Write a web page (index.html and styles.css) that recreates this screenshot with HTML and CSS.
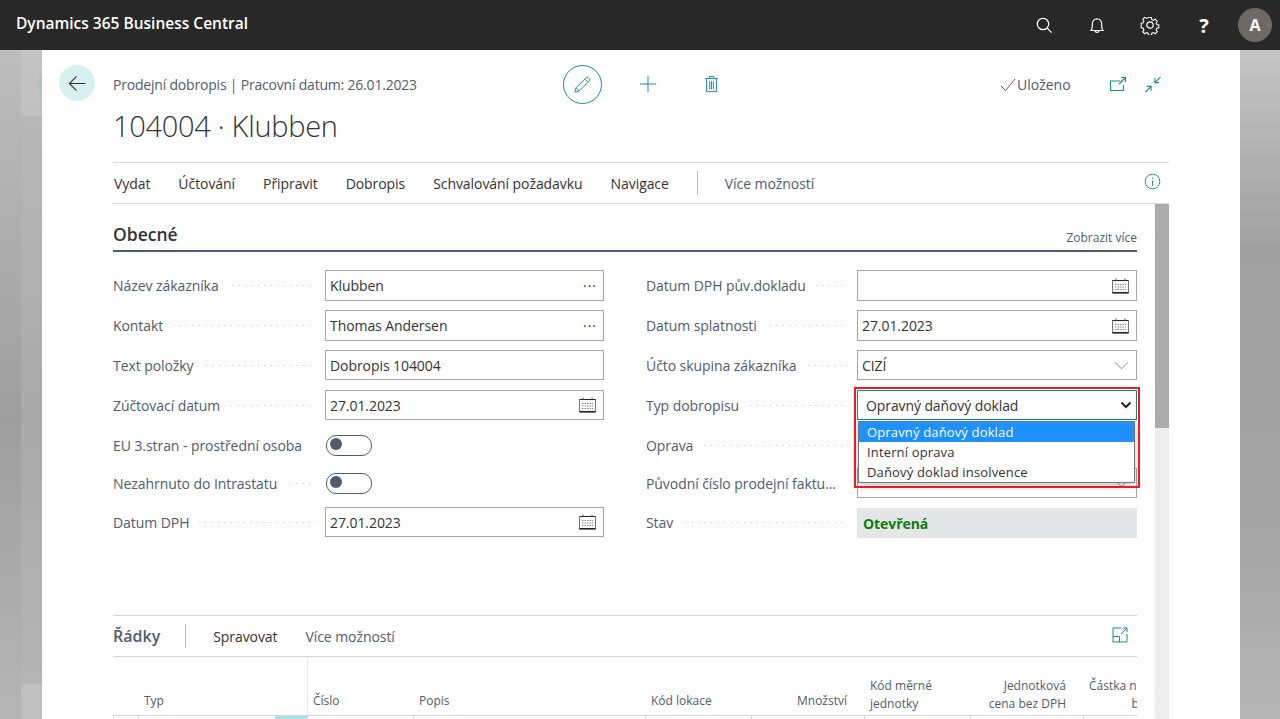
FILE: index.html
```html
<!DOCTYPE html>
<html lang="cs">
<head>
    <meta charset="utf-8">
    <title>Prodejní dobropis</title>
    <link rel="stylesheet" href="styles.css">
</head>
<body>
    <header class="topbar">
        <div class="brand">Dynamics 365 Business Central</div>
        <div class="top-icons">
            <svg class="top-ico" viewBox="0 0 20 20"><circle cx="9" cy="9" r="5.7"/><path d="M13 13l4.6 4.6"/></svg>
            <svg class="top-ico" viewBox="0 0 20 20"><path d="M4 15.500c1.200-1.400 1.400-2.800 1.400-7a4.600 4.600 0 0 1 9.200 0c0 4.200.2 5.600 1.400 7z"/><path d="M8 15.700c.2 2.200 3.800 2.200 4 0"/></svg>
            <svg class="top-ico" viewBox="0 0 20 20"><circle cx="10" cy="10" r="3.200"/><path d="M8.400 1.700h3.200l.5 2.400 1.700.7 2.100-1.300 2.200 2.300-1.300 2 .7 1.700 2.300.5v3.200l-2.300.5-.7 1.700 1.300 2-2.200 2.300-2.100-1.300-1.700.7-.5 2.400H8.400l-.5-2.400-1.700-.7-2.100 1.300-2.200-2.300 1.300-2-.7-1.700-2.300-.5V8l2.300-.5.7-1.700-1.300-2 2.200-2.300 2.100 1.300 1.700-.7z" transform="translate(1 1) scale(.9)"/></svg>
            <span class="help">?</span>
            <span class="avatar">A</span>
        </div>
    </header>

    <div class="stage">
        <div class="behind"><span class="behind-circle"></span></div>

        <main class="card">
            <div class="page-head">
                <div class="back">
                    <svg viewBox="0 0 20 20"><path d="M1.500 10h17M9 2.500L1.500 10 9 17.500"/></svg>
                </div>
                <div class="head-main">
                    <div class="head-top">
                        <div class="crumb">Prodejní dobropis | Pracovní datum: 26.01.2023</div>
                        <div class="actions">
                            <div class="edit-btn">
                                <svg viewBox="0 0 20 20"><path d="M2 18l1.200-4.600L13.800 2.800a1.600 1.600 0 0 1 2.300 0l1.100 1.100a1.600 1.600 0 0 1 0 2.300L6.600 16.800zM3.200 13.400l3.400 3.400M12.400 4.200l3.400 3.400"/></svg>
                            </div>
                            <svg class="act-ico plus" viewBox="0 0 20 20"><path d="M10 1v18M1 10h18"/></svg>
                            <svg class="act-ico trash" viewBox="0 0 16 20"><path d="M1 4h14M5.500 4V1.500h5V4M2.500 4v14.500h11V4M6 7v9M8 7v9M10 7v9"/></svg>
                        </div>
                        <div class="saved">
                            <svg viewBox="0 0 16 14"><path d="M1 8l4.500 4.500L15 1"/></svg>
                            <span>Uloženo</span>
                        </div>
                        <div class="win-icons">
                            <svg viewBox="0 0 18 16"><path d="M11 4.500H1.500v9.500h13V8.500M10 7.500L16.500 1M12 1h4.500v4.500"/></svg>
                            <svg viewBox="0 0 18 18"><path d="M17 1l-6 6M11 2.500V7h4.500M1 17l6-6M2.500 11H7v4.500"/></svg>
                        </div>
                    </div>
                    <h1 class="title">104004 · Klubben</h1>
                </div>
            </div>

            <nav class="menu">
                <a class="menu-item">Vydat</a>
                <a class="menu-item">Účtování</a>
                <a class="menu-item">Připravit</a>
                <a class="menu-item">Dobropis</a>
                <a class="menu-item">Schvalování požadavku</a>
                <a class="menu-item">Navigace</a>
                <span class="menu-sep"></span>
                <a class="menu-item muted">Více možností</a>
                <svg class="info" viewBox="0 0 18 18"><circle cx="9" cy="9" r="7.800"/><path d="M9 8v5.500M9 4.800v1.400"/></svg>
            </nav>

            <div class="scroll-area">
                <div class="content">
                    <section class="general">
                        <div class="section-head">
                            <h2>Obecné</h2>
                            <a class="show-more">Zobrazit více</a>
                        </div>
                        <div class="form-cols">
                            <div class="form-col">
                                <div class="field">
                                    <label>Název zákazníka</label><i class="dots"></i>
                                    <div class="box"><span>Klubben</span><b class="more">···</b></div>
                                </div>
                                <div class="field">
                                    <label>Kontakt</label><i class="dots"></i>
                                    <div class="box"><span>Thomas Andersen</span><b class="more">···</b></div>
                                </div>
                                <div class="field">
                                    <label>Text položky</label><i class="dots"></i>
                                    <div class="box short"><span>Dobropis 104004</span></div>
                                </div>
                                <div class="field">
                                    <label>Zúčtovací datum</label><i class="dots"></i>
                                    <div class="box short"><span>27.01.2023</span>
                                        <svg class="cal" viewBox="0 0 17 16"><use href="#cal"/></svg></div>
                                </div>
                                <div class="field tight">
                                    <label>EU 3.stran - prostřední osoba</label><i class="dots"></i>
                                    <div class="toggle"><span class="knob"></span></div>
                                </div>
                                <div class="field tight last-toggle">
                                    <label>Nezahrnuto do Intrastatu</label><i class="dots"></i>
                                    <div class="toggle"><span class="knob"></span></div>
                                </div>
                                <div class="field">
                                    <label>Datum DPH</label><i class="dots"></i>
                                    <div class="box short"><span>27.01.2023</span>
                                        <svg class="cal" viewBox="0 0 17 16"><use href="#cal"/></svg></div>
                                </div>
                            </div>

                            <div class="form-col">
                                <div class="field">
                                    <label>Datum DPH pův.dokladu</label><i class="dots"></i>
                                    <div class="box"><span></span>
                                        <svg class="cal" viewBox="0 0 17 16"><use href="#cal"/></svg></div>
                                </div>
                                <div class="field">
                                    <label>Datum splatnosti</label><i class="dots"></i>
                                    <div class="box"><span>27.01.2023</span>
                                        <svg class="cal" viewBox="0 0 17 16"><use href="#cal"/></svg></div>
                                </div>
                                <div class="field">
                                    <label>Účto skupina zákazníka</label><i class="dots"></i>
                                    <div class="box short"><span>CIZÍ</span>
                                        <svg class="chev" viewBox="0 0 16 9"><path d="M1 1l7 7 7-7"/></svg></div>
                                </div>
                                <div class="field">
                                    <label>Typ dobropisu</label><i class="dots"></i>
                                    <div class="select-wrap">
                                        <div class="select-open">
                                            <span>Opravný daňový doklad</span>
                                            <svg viewBox="0 0 12 8"><path d="M1.500 1.500L6 6l4.500-4.500"/></svg>
                                        </div>
                                        <ul class="options">
                                            <li class="current">Opravný daňový doklad</li>
                                            <li>Interní oprava</li>
                                            <li>Daňový doklad insolvence</li>
                                        </ul>
                                        <div class="red-frame"></div>
                                    </div>
                                </div>
                                <div class="field tight">
                                    <label>Oprava</label><i class="dots"></i>
                                    <div class="box-gap"></div>
                                </div>
                                <div class="field tight last-toggle">
                                    <label>Původní číslo prodejní faktu...</label><i class="dots"></i>
                                    <div class="box short"><span></span>
                                        <svg class="chev" viewBox="0 0 16 9"><path d="M1 1l7 7 7-7"/></svg></div>
                                </div>
                                <div class="field">
                                    <label>Stav</label><i class="dots"></i>
                                    <div class="status">Otevřená</div>
                                </div>
                            </div>
                        </div>
                    </section>

                    <section class="lines">
                        <div class="lines-bar">
                            <strong class="lines-title">Řádky</strong>
                            <span class="lines-sep"></span>
                            <a class="menu-item">Spravovat</a>
                            <a class="menu-item muted">Více možností</a>
                            <svg class="expand" viewBox="0 0 16 16"><path d="M9 1H1v14h14V7M1 9.500h6.500V15M9 7l6-6M11 1h4v4"/></svg>
                        </div>
                        <div class="grid-wrap">
                            <div class="grid-head">
                                <div></div>
                                <div class="th sticky">Typ</div>
                                <div class="th">Číslo</div>
                                <div class="th">Popis</div>
                                <div class="th">Kód lokace</div>
                                <div class="th right">Množství</div>
                                <div class="th two">Kód měrné jednotky</div>
                                <div class="th two right">Jednotková cena bez DPH</div>
                                <div class="th two right nowrap">Částka na řádku<br>bez DPH</div>
                            </div>
                            <div class="grid-row">
                                <div class="td"></div>
                                <div class="td"><span class="lookup"></span></div>
                                <div class="td"></div>
                                <div class="td"></div>
                                <div class="td"></div>
                                <div class="td"></div>
                                <div class="td"></div>
                                <div class="td"></div>
                                <div class="td"></div>
                            </div>
                        </div>
                    </section>
                </div>
                <div class="scrollbar"><div class="thumb"></div></div>
            </div>
        </main>
    </div>

    <svg class="defs" width="0" height="0">
        <symbol id="cal" viewBox="0 0 17 16">
            <path d="M.5 2.500h16v13H.5z" fill="none" stroke="#777"/>
            <path d="M.5 2.500h16M.5 14.500h16" stroke="#222" fill="none"/>
            <path d="M4 .5v2M13 .5v2" stroke="#555"/>
            <path d="M3 6.500h11M3 9h11M3 11.500h11" stroke="#888" stroke-dasharray="1.500 1"/>
        </symbol>
    </svg>
</body>
</html>
```

FILE: styles.css
```css
* {
    box-sizing: border-box;
}

html, body {
    margin: 0;
    height: 719px;
    overflow: hidden;
}

body {
    font-family: "Open Sans", "Liberation Sans", sans-serif;
    font-size: 14px;
    color: #212121;
    background: #fff;
}

svg {
    display: block;
    fill: none;
}

.defs {
    position: absolute;
}

/* top bar */
.topbar {
    height: 50px;
    background: #282828;
    color: #fff;
    display: flex;
    align-items: center;
    justify-content: space-between;
    padding: 0 8px 4px 16px;
}

.brand {
    font-size: 15.500px;
    font-weight: 600;
}

.top-icons {
    display: flex;
    align-items: center;
    margin-top: 4px;
}

.top-ico {
    width: 20px;
    height: 20px;
    margin-right: 33px;
    stroke: #fff;
    stroke-width: 1.200;
}

.help {
    font-size: 20px;
    font-weight: 700;
    width: 12px;
    margin-left: 5px;
    margin-right: 28px;
    text-align: center;
}

.avatar {
    width: 34px;
    height: 34px;
    border-radius: 50%;
    background: #6f6868;
    font-size: 16px;
    font-weight: 700;
    display: flex;
    align-items: center;
    justify-content: center;
}

/* grey page behind the dialog */
.stage {
    height: 669px;
    display: flex;
    overflow: hidden;
    background: linear-gradient(180deg, #c4c4c4, #a0a0a0 30%, #a4a4a4 70%, #b5b5b5);
}

.behind {
    width: 42px;
    position: relative;
    overflow: hidden;
    background:
        linear-gradient(180deg, #bdbdbd, #9e9e9e 55%, #b5b5b5) left top / 21px 100% no-repeat,
        linear-gradient(180deg, #c4c4c4, #c0c0c0 66px, #b8b8b8 66px, #a9a9a9 55%, #b4b4b4 634px, #c0c0c0 634px) right top / 21px 100% no-repeat;
}

.behind-circle {
    position: absolute;
    left: 38px;
    top: 15px;
    width: 36px;
    height: 36px;
    border-radius: 50%;
    background: #b3bfc0;
}

.card {
    width: 1198px;
    background: #fff;
    padding: 15px 71px 0 17px;
}

.page-head {
    display: flex;
    gap: 18px;
    height: 97px;
}

.back {
    width: 36px;
    height: 36px;
    border-radius: 50%;
    background: #d9f0f2;
    display: flex;
    align-items: center;
    justify-content: center;
}

.back svg {
    width: 19px;
    height: 19px;
    stroke: #333;
    stroke-width: 1.200;
}

.head-main {
    flex: 1;
}

.head-top {
    display: flex;
    align-items: center;
    height: 39px;
}

.crumb {
    width: 450px;
    color: #505c6d;
    font-size: 14px;
    letter-spacing: -0.2px;
}

.actions {
    display: flex;
    align-items: center;
}

.edit-btn {
    width: 39px;
    height: 39px;
    border: 1.500px solid #1a8d95;
    border-radius: 50%;
    display: flex;
    align-items: center;
    justify-content: center;
}

.edit-btn svg {
    width: 19px;
    height: 19px;
    stroke: #1a8d95;
}

.act-ico {
    stroke: #1a8d95;
    stroke-width: 1.100;
}

.plus {
    width: 18px;
    height: 18px;
    margin-left: 37px;
    margin-top: -2px;
}

.trash {
    width: 15px;
    height: 18px;
    margin-left: 47px;
    margin-top: -2px;
}

.saved {
    display: flex;
    align-items: center;
    gap: 1px;
    margin-left: 281px;
    color: #505c6d;
}

.saved svg {
    width: 16px;
    height: 14px;
    stroke: #505c6d;
}

.win-icons {
    display: flex;
    align-items: center;
    gap: 17px;
    margin-left: 38px;
}

.win-icons svg {
    width: 18px;
    height: 17px;
    stroke: #1a8d95;
    stroke-width: 1.200;
}

.title {
    margin: 3px 0 0;
    font-size: 29px;
    font-weight: 300;
    letter-spacing: -0.3px;
    color: #333;
    line-height: 38px;
}

/* action menu */
.menu {
    display: flex;
    align-items: center;
    height: 42px;
    margin-left: 54px;
    border-top: 1px solid #d5d5dc;
    border-bottom: 1px solid #d5d5dc;
    padding: 0 0 0 1px;
}

.menu-item {
    margin-right: 28px;
    color: #333;
    letter-spacing: -0.07px;
}

.menu-item.muted {
    color: #505c6d;
}

.menu-sep {
    width: 1px;
    height: 24px;
    background: #b5b5b5;
    margin-right: 27px;
}

.info {
    margin-left: auto;
    margin-right: 8px;
    margin-top: -4px;
    width: 17px;
    height: 17px;
    stroke: #1a8d95;
}

/* scrolling body */
.scroll-area {
    display: flex;
    margin-left: 54px;
}

.content {
    width: 1024px;
}

.scrollbar {
    width: 14px;
    margin-left: 18px;
    background: #eee;
    height: 520px;
}

.thumb {
    height: 224px;
    background: #ababab;
}

.section-head {
    display: flex;
    align-items: flex-end;
    justify-content: space-between;
    height: 48px;
    border-bottom: 2px solid #505c6d;
    padding-bottom: 4px;
}

.section-head h2 {
    margin: 0;
    font-size: 17.500px;
    font-weight: 600;
    color: #333;
}

.show-more {
    font-size: 12px;
    color: #505c6d;
}

.form-cols {
    display: grid;
    grid-template-columns: 491px 491px;
    column-gap: 42px;
    margin-top: 18px;
}

.field {
    display: flex;
    align-items: center;
    height: 31px;
    margin-bottom: 9px;
    color: #505c6d;
    letter-spacing: -0.07px;
}

.field.tight {
    margin-bottom: 7px;
}

.field.last-toggle {
    margin-bottom: 8px;
}

.field label {
    white-space: nowrap;
}

.dots {
    flex: 1;
    height: 1px;
    margin: 0 9px 0 10px;
    background-image: linear-gradient(90deg, #bbb 1px, transparent 1px);
    background-size: 6.500px 1px;
    background-position: right center;
}

.box, .toggle, .select-wrap, .status, .box-gap {
    flex: 0 0 280px;
}

.form-col:first-child .box,
.form-col:first-child .toggle {
    flex-basis: 279px;
}

.box {
    height: 31px;
    border: 1px solid #a6a6a6;
    padding: 0 4px;
    display: flex;
    align-items: center;
    justify-content: space-between;
    color: #333;
    background: #fff;
}

.box.short {
    height: 30px;
    align-self: flex-start;
}

.more {
    font-weight: 400;
    margin-right: 2px;
    color: #333;
    letter-spacing: 1px;
}

.cal {
    width: 17px;
    height: 16px;
    margin-right: 3px;
}

.chev {
    width: 15px;
    height: 9px;
    margin-right: 3px;
    stroke: #888;
}

.toggle {
    height: 19px;
    margin-bottom: 2px;
    position: relative;
}

.toggle::before {
    content: "";
    display: block;
    width: 44px;
    height: 19px;
    margin-left: 1px;
    border: 1px solid #505c6d;
    border-radius: 10px;
}

.knob {
    position: absolute;
    left: 5px;
    top: 3px;
    width: 12px;
    height: 12px;
    border-radius: 50%;
    background: #505c6d;
}

.status {
    height: 30px;
    align-self: flex-end;
    background: #e5e6e8;
    color: #107c10;
    font-weight: 700;
    display: flex;
    align-items: center;
    padding-left: 6px;
}

/* opened select, with the red annotation frame over it */
.select-wrap {
    position: relative;
    height: 31px;
}

.select-open {
    height: 30px;
    border: 1px solid #0f8a8d;
    padding: 0 4px 0 8px;
    display: flex;
    align-items: center;
    justify-content: space-between;
    color: #333;
    background: #fff;
    letter-spacing: -0.1px;
}

.select-open svg {
    width: 12px;
    height: 8px;
    stroke: #222;
    stroke-width: 2;
}

.options {
    position: absolute;
    left: 1px;
    top: 31px;
    width: 277px;
    margin: 0;
    padding: 0;
    list-style: none;
    background: #fff;
    border: 1px solid #767676;
    box-shadow: 0 2px 8px rgba(0, 0, 0, 0.25);
    font-size: 13px;
    letter-spacing: 0.15px;
    color: #333;
    z-index: 2;
}

.options li {
    height: 20px;
    line-height: 20px;
    padding-left: 8px;
}

.options li.current {
    background: #1e90ff;
    color: #fff;
}

.red-frame {
    position: absolute;
    left: -3px;
    top: -3px;
    width: 286px;
    height: 101px;
    border: 2px solid #ed1c24;
    z-index: 3;
}

/* lines part */
.lines {
    margin-top: 68px;
}

.lines-bar {
    display: flex;
    align-items: center;
    height: 42px;
    border-top: 1px solid #d5d5d5;
    border-bottom: 1px solid #d5d5d5;
}

.lines-title {
    color: #505c6d;
    font-size: 16px;
    font-weight: 600;
    margin-right: 25px;
}

.lines-sep {
    width: 1px;
    height: 24px;
    background: #b5b5b5;
    margin-right: 27px;
}

.expand {
    margin-left: auto;
    margin-right: 9px;
    margin-top: -2px;
    width: 16px;
    height: 16px;
    stroke: #1a8d95;
}

.grid-wrap {
    overflow: hidden;
}

.grid-head, .grid-row {
    display: grid;
    grid-template-columns: 25px 169px 106px 232px 106px 113px 106px 113px 113px;
    width: 1083px;
}

.grid-head {
    height: 59px;
    border-bottom: 1px solid #d5d5d5;
}

.th {
    align-self: end;
    font-size: 12px;
    line-height: 18px;
    color: #505c6d;
    padding: 0 6px 5px;
}

.th.two {
    padding-bottom: 2px;
}

.th.nowrap {
    white-space: nowrap;
    padding-left: 0;
}

.th.sticky {
    align-self: stretch;
    display: flex;
    align-items: flex-end;
    margin-right: -1px;
    border-right: 1px solid #e8e8e8;
}

.th.right {
    text-align: right;
    padding-right: 17px;
}

.grid-row {
    height: 40px;
}

.td {
    border-left: 1px solid #d5d5d5;
    position: relative;
}

.lookup {
    position: absolute;
    right: 0;
    top: 0;
    width: 32px;
    height: 30px;
    background: #a9e3e8;
}
```
